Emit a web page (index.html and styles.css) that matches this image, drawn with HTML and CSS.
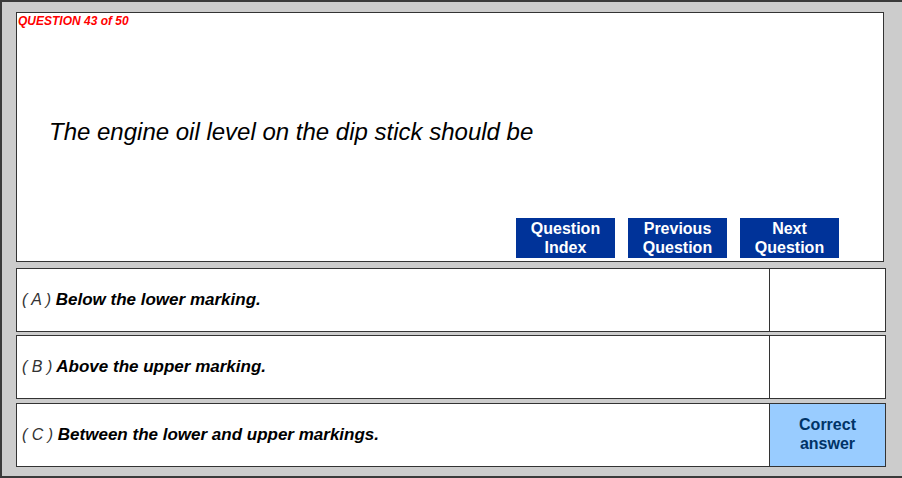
FILE: index.html
```html
<!DOCTYPE html>
<html lang="en">
<head>
  <meta charset="UTF-8">
  <title>Question 43</title>
  <link rel="stylesheet" href="styles.css">
</head>
<body>

<div class="frame">
    <div class="question">
        <div class="label">QUESTION 43 of 50</div>
        <p class="text">The engine oil level on the dip stick should be</p>
        <div class="buttons">
            <div class="btn">Question<br>Index</div>
            <div class="btn">Previous<br>Question</div>
            <div class="btn">Next<br>Question</div>
        </div>
    </div>

    <div class="answer">
        <div class="choice"><span class="letter">( A )</span> Below the lower marking.</div>
        <div class="result"></div>
    </div>
    <div class="answer">
        <div class="choice"><span class="letter">( B )</span> Above the upper marking.</div>
        <div class="result"></div>
    </div>
    <div class="answer">
        <div class="choice"><span class="letter">( C )</span> Between the lower and upper markings.</div>
        <div class="result correct">Correct<br>answer</div>
    </div>
</div>

</body>
</html>
```

FILE: styles.css
```css
body {
    margin: 0;
    overflow: hidden;
    font-family: "Liberation Sans", Arial, sans-serif;
}
.frame {
    width: 920px;
    height: 464px;
    background: #cccccc;
    border: 2px solid #3a3a3a;
    border-right: none;
    padding: 10px 0 0 14px;
    display: flex;
    flex-direction: column;
}
.question {
    width: 866px;
    height: 248px;
    background: #fff;
    border: 1px solid #333;
    display: flex;
    flex-direction: column;
    margin-bottom: 6px;
}
.label {
    color: #ff0000;
    font-size: 12px;
    font-weight: bold;
    font-style: italic;
    padding: 1px 0 0 1px;
    line-height: 14px;
}
.text {
    margin: 90px 0 0 32px;
    font-size: 24px;
    font-style: italic;
    line-height: 28px;
    color: #000;
}
.buttons {
    margin-top: auto;
    margin-bottom: 3px;
    display: flex;
    justify-content: flex-end;
    gap: 13px;
    padding-right: 44px;
}
.btn {
    width: 99px;
    height: 40px;
    background: #003399;
    color: #fff;
    font-size: 16px;
    font-weight: bold;
    line-height: 19px;
    text-align: center;
    display: flex;
    align-items: center;
    justify-content: center;
}
.answer {
    width: 868px;
    height: 62px;
    border: 1px solid #333;
    background: #fff;
    display: flex;
    margin-bottom: 3px;
}
.answer + .answer + .answer {
    margin-top: 1px;
}
.choice {
    flex: 1;
    display: flex;
    align-items: center;
    padding-left: 5px;
    font-size: 17px;
    font-weight: bold;
    font-style: italic;
    color: #000;
    white-space: pre;
}
.letter {
    font-weight: normal;
    font-size: 16px;
    color: #333;
}
.result {
    width: 115px;
    border-left: 1px solid #333;
}
.correct {
    background: #99ccff;
    color: #003366;
    font-size: 16px;
    font-weight: bold;
    line-height: 19px;
    text-align: center;
    display: flex;
    align-items: center;
    justify-content: center;
    padding-bottom: 2px;
}
```
